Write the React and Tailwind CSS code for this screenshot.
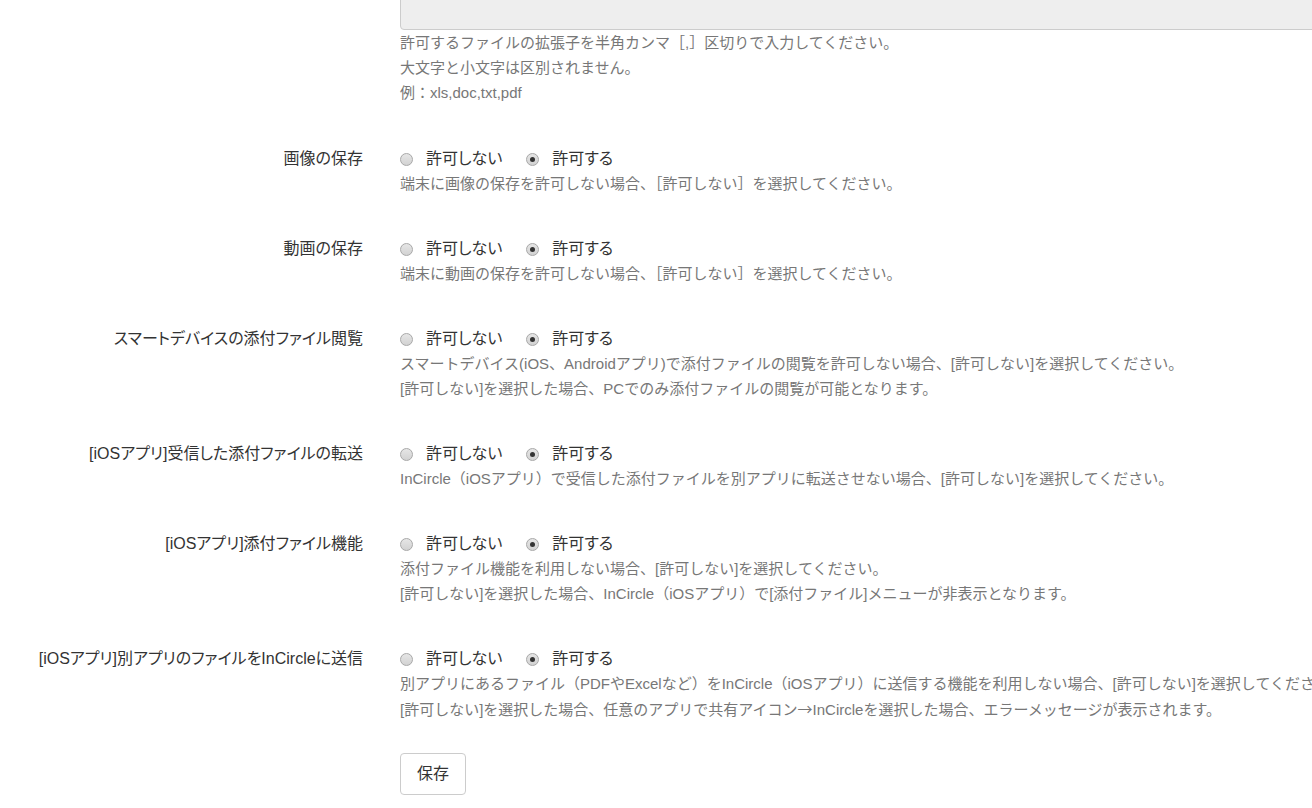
import React from 'react';

const cjk = { fontFamily: '"Noto Sans CJK JP", sans-serif' };

const rows = [
  {
    label: '画像の保存',
    help: ['端末に画像の保存を許可しない場合、［許可しない］を選択してください。'],
  },
  {
    label: '動画の保存',
    help: ['端末に動画の保存を許可しない場合、［許可しない］を選択してください。'],
  },
  {
    label: 'スマートデバイスの添付ファイル閲覧',
    help: [
      'スマートデバイス(iOS、Androidアプリ)で添付ファイルの閲覧を許可しない場合、[許可しない]を選択してください。',
      '[許可しない]を選択した場合、PCでのみ添付ファイルの閲覧が可能となります。',
    ],
  },
  {
    label: '[iOSアプリ]受信した添付ファイルの転送',
    help: ['InCircle（iOSアプリ）で受信した添付ファイルを別アプリに転送させない場合、[許可しない]を選択してください。'],
  },
  {
    label: '[iOSアプリ]添付ファイル機能',
    help: [
      '添付ファイル機能を利用しない場合、[許可しない]を選択してください。',
      '[許可しない]を選択した場合、InCircle（iOSアプリ）で[添付ファイル]メニューが非表示となります。',
    ],
  },
  {
    label: '[iOSアプリ]別アプリのファイルをInCircleに送信',
    help: [
      '別アプリにあるファイル（PDFやExcelなど）をInCircle（iOSアプリ）に送信する機能を利用しない場合、[許可しない]を選択してください。',
      <>
        [許可しない]を選択した場合、任意のアプリで共有アイコン<span style={cjk}>→</span>InCircleを選択した場合、エラーメッセージが表示されます。
      </>,
    ],
  },
];

function Radio({ checked }) {
  return (
    <span className="w-[13px] h-[13px] rounded-full border border-[#a8a8a8] bg-gradient-to-b from-[#e6e6e6] to-[#d2d2d2] flex items-center justify-center shrink-0">
      {checked && <span className="w-[5px] h-[5px] rounded-full bg-[#333]" />}
    </span>
  );
}

function Help({ lines }) {
  return (
    <div className="text-[15px] leading-[25px] text-[#777] whitespace-nowrap">
      {lines.map((l, i) => (
        <div key={i}>{l}</div>
      ))}
    </div>
  );
}

export default function App() {
  return (
    <div
      className="w-[1312px] h-[808px] overflow-hidden bg-white text-[#333]"
      style={{ fontFamily: '"Liberation Sans", "Noto Sans CJK JP", sans-serif' }}
    >
      <div className="flex">
        <div className="w-[400px] shrink-0" />
        <div className="flex-1 min-w-0">
          <div className="h-[40px] -mt-[10px] mr-[-10px] bg-[#eee] border border-[#ccc] rounded-[4px]" />
          <Help
            lines={[
              '許可するファイルの拡張子を半角カンマ［,］区切りで入力してください。',
              '大文字と小文字は区別されません。',
              '例：xls,doc,txt,pdf',
            ]}
          />
        </div>
      </div>

      <div className="mt-[42px] flex flex-col gap-[41px]">
        {rows.map((r) => (
          <div key={r.label} className="flex">
            <div className="w-[400px] shrink-0 pr-[37px] text-right text-[16px] leading-[24px] whitespace-nowrap [font-feature-settings:'palt']">
              {r.label}
            </div>
            <div className="flex-1 min-w-0">
              <div className="flex items-center h-[24px] text-[16px] [font-feature-settings:'palt']">
                <label className="flex items-center gap-[13px] mr-[24px]">
                  <Radio />
                  <span>許可しない</span>
                </label>
                <label className="flex items-center gap-[13px]">
                  <Radio checked />
                  <span>許可する</span>
                </label>
              </div>
              <Help lines={r.help} />
            </div>
          </div>
        ))}
      </div>

      <div className="pl-[400px] mt-[31px]">
        <button className="h-[42px] px-[16px] border border-[#ccc] rounded-[4px] bg-white text-[16px] text-[#333]">
          保存
        </button>
      </div>
    </div>
  );
}
